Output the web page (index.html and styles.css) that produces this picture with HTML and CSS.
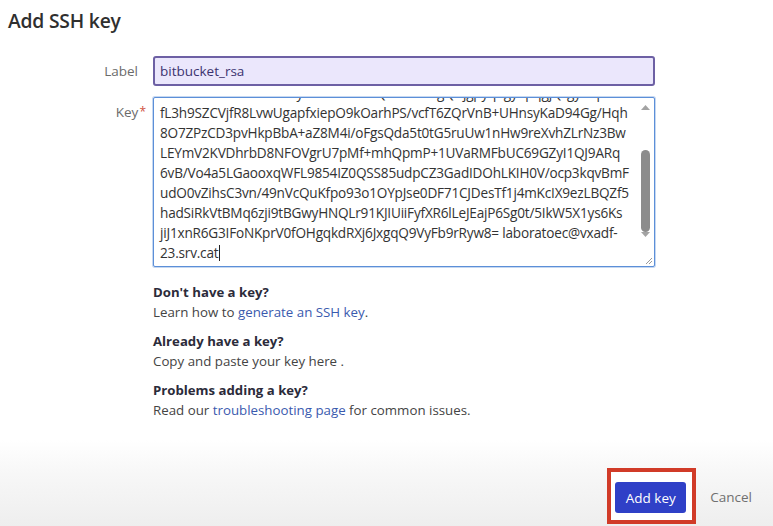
FILE: index.html
```html
<!DOCTYPE html>
<html lang="en">
<head>
<meta charset="utf-8">
<title>Add SSH key</title>
<link rel="stylesheet" href="styles.css">
</head>
<body>
<div class="dialog">
  <h2 class="title">Add SSH key</h2>
  <div class="form">
    <div class="row">
      <label class="lbl">Label</label>
      <div class="input">bitbucket_rsa</div>
    </div>
    <div class="row">
      <label class="lbl lbl-top">Key<span class="req">*</span></label>
      <div class="textarea">
        <div class="ta-text">
          <div class="ta-lines">
            <div class="ln">ssh-rsa AAAAB3NzaC1yc2EAAAADAQABAAABgQCjgpyqXgy7pqgjQ/gy9Kp</div>
            <div class="ln">fL3h9SZCVjfR8LvwUgapfxiepO9kOarhPS/vcfT6ZQrVnB+UHnsyKaD94Gg/Hqh</div>
            <div class="ln">8O7ZPzCD3pvHkpBbA+aZ8M4i/oFgsQda5t0tG5ruUw1nHw9reXvhZLrNz3Bw</div>
            <div class="ln">LEYmV2KVDhrbD8NFOVgrU7pMf+mhQpmP+1UVaRMFbUC69GZyI1QJ9ARq</div>
            <div class="ln">6vB/Vo4a5LGaooxqWFL9854IZ0QSS85udpCZ3GadIDOhLKIH0V/ocp3kqvBmF</div>
            <div class="ln">udO0vZihsC3vn/49nVcQuKfpo93o1OYpJse0DF71CJDesTf1j4mKcIX9ezLBQZf5</div>
            <div class="ln">hadSiRkVtBMq6zji9tBGwyHNQLr91KJIUiiFyfXR6lLeJEajP6Sg0t/5IkW5X1ys6Ks</div>
            <div class="ln">jiJ1xnR6G3IFoNKprV0fOHgqkdRXj6JxgqQ9VyFb9rRyw8= laboratoec@vxadf-</div>
            <div class="ln">23.srv.cat<span class="caret"></span></div>
          </div>
        </div>
        <div class="scrollbar">
          <svg class="arrow" width="9" height="5" viewBox="0 0 9 5"><path d="M0 5 L4.5 0 L9 5 Z" fill="#a3a3a3"/></svg>
          <div class="track"><div class="thumb"></div></div>
          <svg class="arrow" width="9" height="5" viewBox="0 0 9 5"><path d="M0 0 L4.5 5 L9 0 Z" fill="#a3a3a3"/></svg>
          <svg class="grip" width="10" height="10" viewBox="0 0 10 10"><path d="M9 3 L3 9 M9 6 L6 9" stroke="#9a9a9a" stroke-width="1"/></svg>
        </div>
      </div>
    </div>
    <div class="help">
      <div class="help-item">
        <div class="help-title">Don't have a key?</div>
        <div class="help-text">Learn how to <a href="#">generate an SSH key</a>.</div>
      </div>
      <div class="help-item">
        <div class="help-title">Already have a key?</div>
        <div class="help-text">Copy and paste your key here .</div>
      </div>
      <div class="help-item">
        <div class="help-title">Problems adding a key?</div>
        <div class="help-text">Read our <a href="#">troubleshooting page</a> for common issues.</div>
      </div>
    </div>
  </div>
  <div class="footer">
    <div class="highlight"><button class="btn-primary">Add key</button></div>
    <a class="cancel" href="#">Cancel</a>
  </div>
</div>
</body>
</html>
```
FILE: styles.css
```css
* { box-sizing: border-box; }
html, body { margin: 0; padding: 0; background: #fff; }
body {
  font-family: "Open Sans", "Noto Sans", "Liberation Sans", sans-serif;
  color: #333;
  width: 773px;
  height: 526px;
  overflow: hidden;
}
.dialog {
  display: flex;
  flex-direction: column;
  height: 526px;
}
.title {
  margin: 0;
  padding: 8px 0 0 8px;
  font-size: 19.3px;
  font-weight: 600;
  line-height: 26px;
  color: #2f2f2f;
  letter-spacing: -0.2px;
}
.form {
  padding-top: 22px;
  flex: 1;
}
.row {
  display: flex;
  align-items: flex-start;
  margin-bottom: 11px;
}
.lbl {
  width: 153px;
  padding-right: 15px;
  text-align: right;
  font-size: 13.5px;
  color: #6b6b6b;
  line-height: 30px;
}
.lbl-top { line-height: 30px; }
.req { color: #d0513f; margin-right: -8px; font-size: 12px; vertical-align: 1px; margin-left: 1px; }
.input {
  width: 502px;
  height: 30px;
  border: 2px solid #6d60a4;
  border-radius: 3px;
  background: #ebe7fc;
  color: #3b3370;
  font-size: 13.5px;
  line-height: 26px;
  padding-left: 5px;
}
.textarea {
  width: 502px;
  height: 170px;
  border: 1px solid #5c8fd8;
  box-shadow: 0 0 0 1px rgba(92,143,216,0.35);
  border-radius: 2px;
  display: flex;
  background: #fff;
}
.ta-text {
  flex: 1;
  overflow: hidden;
  padding-left: 6px;
}
.ta-lines {
  margin-top: -16px;
  padding-top: 1px;
  font-size: 13.6px;
  line-height: 20px;
  color: #333;
  letter-spacing: -0.2px;
}
.ln { white-space: nowrap; }
.caret {
  display: inline-block;
  width: 1px;
  height: 16px;
  background: #222;
  vertical-align: -3px;
  margin-left: 1px;
}
.scrollbar {
  width: 17px;
  display: flex;
  flex-direction: column;
  align-items: center;
  padding-top: 7px;
}
.arrow { flex: none; }
.track {
  height: 122px;
  width: 100%;
  display: flex;
  justify-content: center;
  padding-top: 40px;
}
.thumb {
  width: 9px;
  height: 82px;
  border-radius: 5px;
  background: #8c8c8c;
}
.grip { margin-top: auto; margin-bottom: 1px; margin-left: 4px; }
.help {
  margin-left: 153px;
  padding-top: 4px;
}
.help-item { margin-bottom: 9px; }
.help-title {
  font-size: 13.2px;
  font-weight: 700;
  color: #2b2b3a;
  line-height: 20px;
}
.help-text {
  font-size: 13.3px;
  color: #444;
  line-height: 20px;
}
.help-text a { color: #3a5aae; text-decoration: none; }
.footer {
  height: 86px;
  flex: none;
  background: linear-gradient(to bottom, #ffffff 0%, #f7f7f7 40%, #eeeeee 100%);
  display: flex;
  justify-content: flex-end;
  align-items: flex-start;
  padding-top: 28px;
  padding-right: 21px;
}
.highlight {
  border: 4px solid #d13b28;
  background: #fff;
  padding: 10px 6px 7px 4px;
}
.btn-primary {
  font-family: inherit;
  font-size: 13.5px;
  color: #fff;
  background: #2f40c7;
  border: none;
  border-radius: 3px;
  width: 71px;
  height: 31px;
  padding: 0;
}
.cancel {
  font-size: 13.5px;
  color: #707070;
  text-decoration: none;
  margin-left: 14px;
  margin-top: 20px;
}
```
